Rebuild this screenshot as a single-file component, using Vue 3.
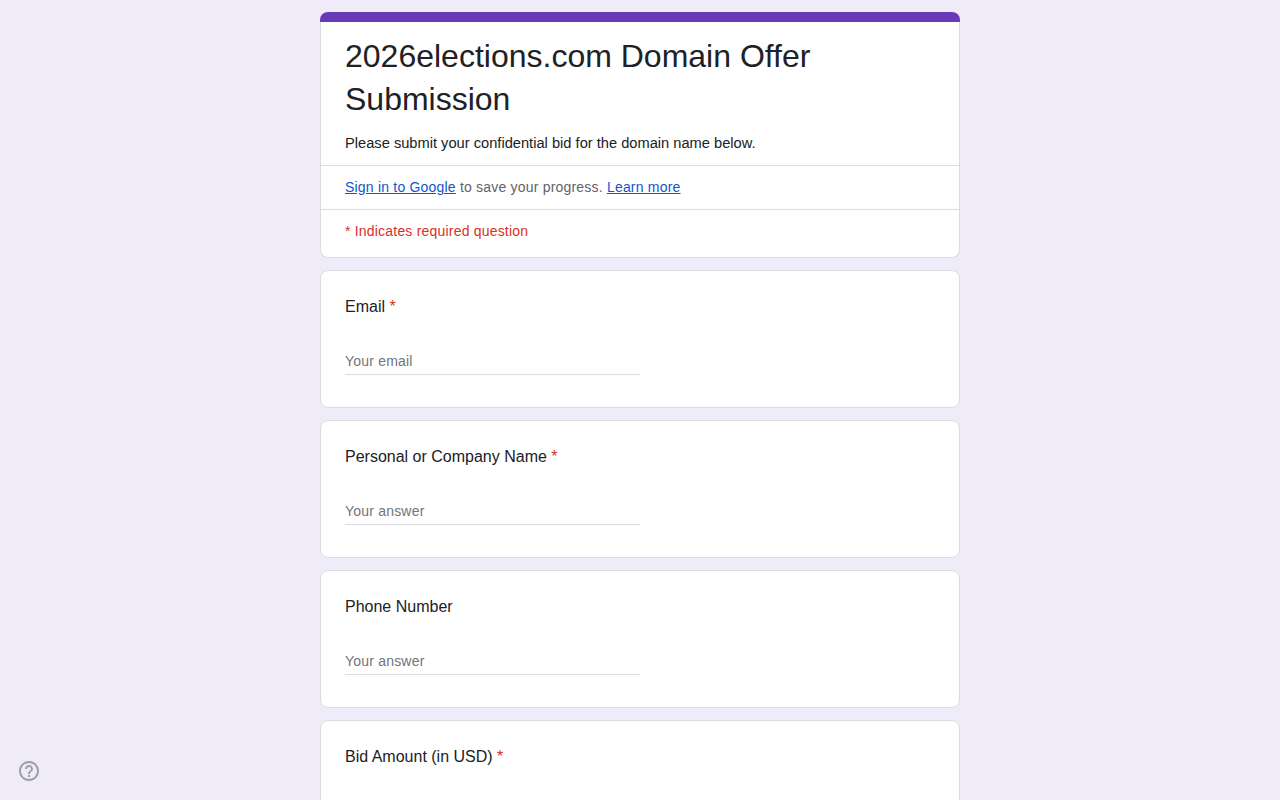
<template>
  <div class="page">
    <div class="form">
      <section class="card header-card">
        <div class="accent"></div>
        <div class="intro">
          <h1 class="title">2026elections.com Domain Offer Submission</h1>
          <p class="description">Please submit your confidential bid for the domain name below.</p>
        </div>
        <div class="row sign-in">
          <a href="#" class="link">Sign in to Google</a> to save your progress. <a href="#" class="link">Learn more</a>
        </div>
        <div class="row required-note">* Indicates required question</div>
      </section>

      <section v-for="q in questions" :key="q.label" class="card question">
        <div class="question-label">
          {{ q.label }}<span v-if="q.required" class="star"> *</span>
        </div>
        <div class="field">
          <input type="text" class="answer" :placeholder="q.placeholder">
        </div>
      </section>
    </div>

    <button class="help" aria-label="Help">
      <svg width="24" height="24" viewBox="0 0 24 24" fill="#9e9ea6">
        <path d="M11 18h2v-2h-2v2zm1-16C6.48 2 2 6.48 2 12s4.48 10 10 10 10-4.48 10-10S17.52 2 12 2zm0 18c-4.41 0-8-3.59-8-8s3.59-8 8-8 8 3.59 8 8-3.59 8-8 8zm0-14c-2.21 0-4 1.79-4 4h2c0-1.1.9-2 2-2s2 .9 2 2c0 2-3 1.75-3 5h2c0-2.25 3-2.5 3-5 0-2.21-1.79-4-4-4z"/>
      </svg>
    </button>
  </div>
</template>

<script setup>
const questions = [
  { label: 'Email', required: true, placeholder: 'Your email' },
  { label: 'Personal or Company Name', required: true, placeholder: 'Your answer' },
  { label: 'Phone Number', required: false, placeholder: 'Your answer' },
  { label: 'Bid Amount (in USD)', required: true, placeholder: 'Your answer' }
];
</script>

<style>
html, body {
  margin: 0;
  background-color: #f0ebf8;
}
</style>

<style scoped>
.page {
  height: 100vh;
  overflow: hidden;
  font-family: "Liberation Sans", Arial, sans-serif;
  color: #202124;
}

.form {
  width: 640px;
  margin: 0 auto;
  padding-top: 12px;
  display: flex;
  flex-direction: column;
  gap: 12px;
}

.card {
  box-sizing: border-box;
  background-color: #fff;
  border: 1px solid #dadce0;
  border-radius: 8px;
}

.header-card {
  border-top: none;
}

.accent {
  height: 10px;
  margin: 0 -1px;
  border-radius: 8px 8px 0 0;
  background-color: #673ab7;
}

.intro {
  padding: 13px 24px 0;
}

.title {
  margin: 0;
  font-size: 32px;
  font-weight: 400;
  line-height: 43px;
}

.description {
  margin: 0;
  padding: 12px 0 12px;
  font-size: 14.67px;
  line-height: 20px;
  color: #202124;
}

.row {
  padding: 0 24px;
  border-top: 1px solid #dadce0;
  font-size: 14px;
  letter-spacing: 0.2px;
}

.sign-in {
  height: 43px;
  line-height: 43px;
  color: #5f6368;
}

.link {
  color: #1155cc;
  text-decoration: underline;
}

.required-note {
  height: 47px;
  line-height: 42px;
  color: #d93025;
}

.question {
  height: 138px;
  padding: 24px 24px 0;
}

.question-label {
  font-size: 16px;
  line-height: 24px;
  white-space: pre-wrap;
}

.star {
  color: #d93025;
}

.field {
  margin-top: 32px;
  width: 295px;
}

.answer {
  display: block;
  box-sizing: border-box;
  width: 100%;
  height: 24px;
  padding: 0 0 4px;
  border: none;
  border-bottom: 1px solid #dadce0;
  outline: none;
  background: transparent;
  font-family: inherit;
  font-size: 14px;
  letter-spacing: 0.2px;
  color: #202124;
}

.answer::placeholder {
  color: #70757a;
  opacity: 1;
}

.help {
  position: fixed;
  left: 17px;
  bottom: 17px;
  width: 24px;
  height: 24px;
  padding: 0;
  border: none;
  background: none;
}
</style>
